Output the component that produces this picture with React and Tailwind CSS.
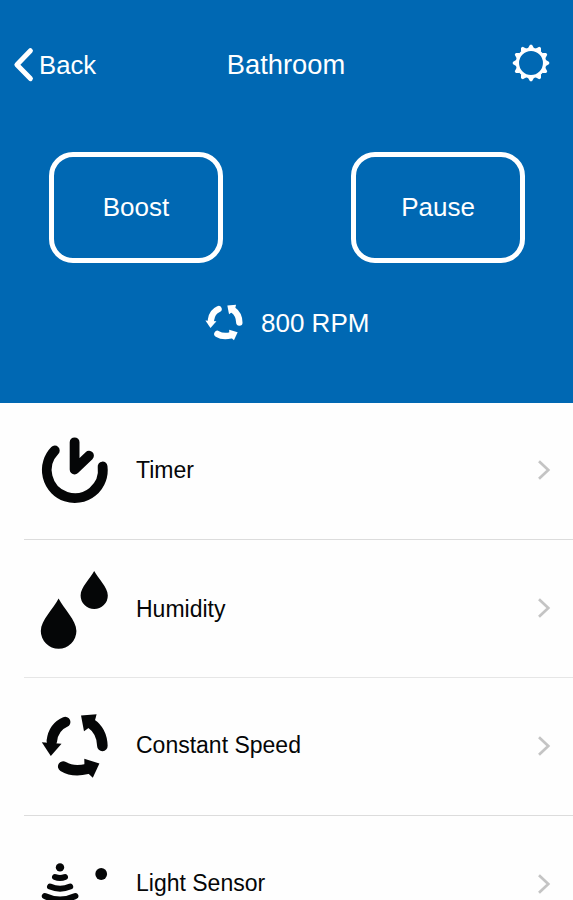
const CycleIcon = ({ className, strokeWidth = 10.5 }) => (
  <svg viewBox="41 713 68 66" className={className} fill="none" stroke="currentColor" strokeWidth={strokeWidth} strokeLinecap="round">
    <path d="M65.2 722 Q53.5 727 51.8 741" />
    <path d="M102.4 746 Q102 731 91 723.5" />
    <path d="M63.2 766.5 Q73 772.5 87 769" />
    <g fill="currentColor" stroke="none">
      <path d="M41.8 742.3 L61.5 743.8 L50.8 756 Z" />
      <path d="M81 715.6 L96.6 714.2 L94 724 L84 731.3 Z" />
      <path d="M84.3 758.8 L99.4 763.4 L92.8 777.8 L84.5 770 Z" />
    </g>
  </svg>
);

const TimerIcon = () => (
  <svg viewBox="35 403 80 136" className="h-[136px] w-20" fill="none" stroke="currentColor" strokeWidth="9.8" strokeLinecap="round">
    <path d="M54.8 450.5 A28 28 0 1 0 102.6 466.5" />
    <path d="M74.6 442.3 V469.5 L89 455.7" strokeLinejoin="round" />
  </svg>
);

const HumidityIcon = () => (
  <svg viewBox="35 540 80 137" className="h-[137px] w-20" fill="currentColor">
    <path d="M94.2 571 C98 578.5 107.8 587 107.8 595.5 A13.6 13.6 0 0 1 80.6 595.5 C80.6 587 90.4 578.5 94.2 571 Z" />
    <path d="M58.6 598.5 C63.5 608.5 76.4 620 76.4 631 A17.8 17.8 0 0 1 40.8 631 C40.8 620 53.7 608.5 58.6 598.5 Z" />
  </svg>
);

const LightIcon = () => (
  <svg viewBox="35 816 80 137" className="h-[137px] w-20" fill="none" stroke="currentColor" strokeWidth="6" strokeLinecap="round">
    <circle cx="60" cy="867.4" r="4.2" fill="currentColor" stroke="none" />
    <circle cx="101.2" cy="874" r="5.9" fill="currentColor" stroke="none" />
    <path d="M55 877 Q60 879.2 65 877" />
    <path d="M50 886.6 Q60 890.8 70.2 886.6" />
    <path d="M44.8 896 Q60 903 75.4 896" />
  </svg>
);

const GearIcon = () => (
  <svg viewBox="-19 -19 38 38" className="h-[38px] w-[38px]" fill="none" stroke="currentColor">
    <circle r="13.6" strokeWidth="3.3" />
    {[0, 30, 60, 90, 120, 150, 180, 210, 240, 270, 300, 330].map((angle) => (
      <path key={angle} d="M-3.2 -14.5 L-1 -18.2 H1 L3.2 -14.5 Z" fill="currentColor" stroke="none" transform={`rotate(${angle})`} />
    ))}
  </svg>
);

const items = [
  { label: 'Timer', icon: <TimerIcon />, row: 'h-[137px]', line: 'border-[#dcdcdc]', shift: 'pb-px' },
  { label: 'Humidity', icon: <HumidityIcon />, row: 'h-[138px]', line: 'border-[#e6e6e6]', shift: 'pt-0.5' },
  {
    label: 'Constant Speed',
    icon: <CycleIcon className="mx-1.5 mb-0.5 h-[66px] w-[68px]" />,
    row: 'h-[138px]',
    line: 'border-[#dcdcdc]',
    shift: 'pb-0.5',
  },
  { label: 'Light Sensor', icon: <LightIcon />, row: 'h-[138px]', line: 'border-[#dcdcdc]', shift: 'pb-0.5' },
];

const App = () => {
  return (
    <div className="h-[900px] w-[573px] overflow-hidden bg-[#fefefe] font-['Liberation_Sans',Arial,sans-serif] text-[#050607]">
      <header className="h-[403px] bg-[#0068b3] text-white">
        <div className="grid h-[130px] grid-cols-3 items-center pr-[23px] pl-[13px]">
          <button className="flex items-center gap-[5px] text-[25.7px]">
            <svg viewBox="0 0 21 36" className="h-9 w-[21px]" fill="none" stroke="currentColor" strokeWidth="5" strokeLinecap="round" strokeLinejoin="round">
              <path d="M17.4 3.7 L3.9 17.8 L17.4 31.6" />
            </svg>
            Back
          </button>
          <h1 className="pb-px pl-[9px] text-center text-[27.3px] leading-none">Bathroom</h1>
          <button className="justify-self-end pb-1">
            <GearIcon />
          </button>
        </div>

        <div className="flex justify-between pt-[22px] pr-12 pl-[49px] text-[26px]">
          <button className="h-[111px] w-[174px] rounded-[24px] border-[5px] border-white">Boost</button>
          <button className="h-[111px] w-[174px] rounded-[24px] border-[5px] border-white">Pause</button>
        </div>

        <div className="flex items-center pt-[39px] pl-[205px] text-[26px]">
          <CycleIcon className="h-[37px] w-[38px]" strokeWidth={11.5} />
          <span className="ml-[18px] pt-0.5">800 RPM</span>
        </div>
      </header>

      <ul>
        {items.map(({ label, icon, row, line, shift }) => (
          <li key={label} className={`ml-6 flex items-center border-b pr-[22px] pl-[11px] ${row} ${line}`}>
            {icon}
            <span className={`ml-[21px] flex-1 text-[23px] ${shift}`}>{label}</span>
            <svg viewBox="0 0 14 22" className="mb-0.5 h-[22px] w-3.5" fill="none" stroke="#c4c4c4" strokeWidth="2.7">
              <path d="M2 2.2 L11.3 11 L2 19.8" />
            </svg>
          </li>
        ))}
      </ul>
    </div>
  );
};

export default App;
